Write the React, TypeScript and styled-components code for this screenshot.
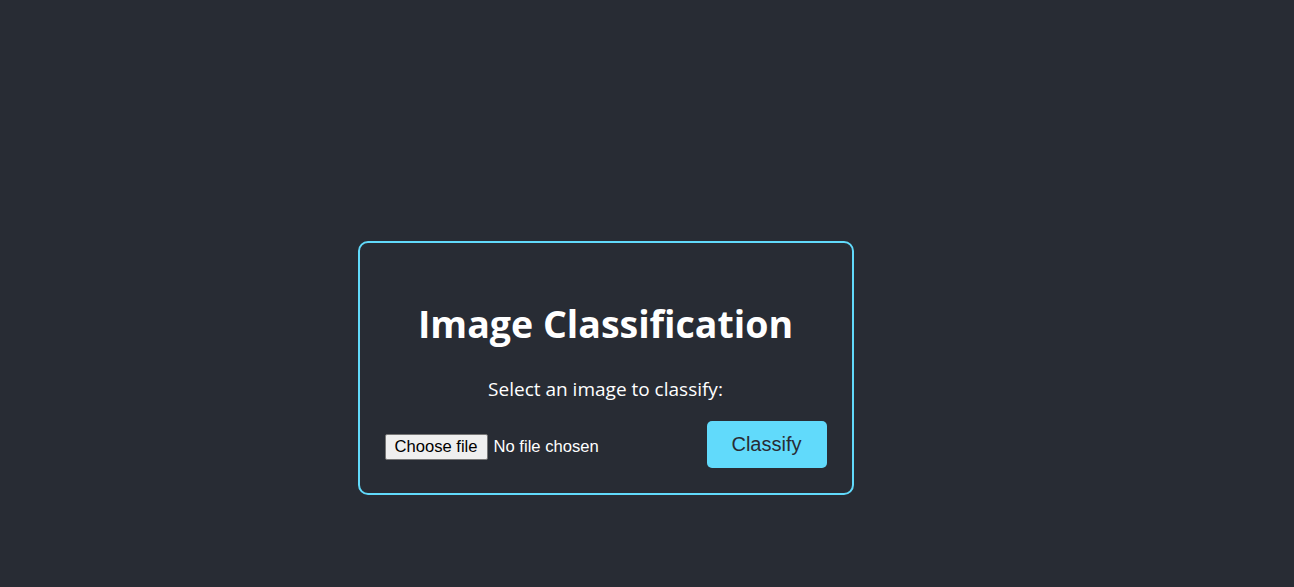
import React, { useState } from "react";
import styled, { createGlobalStyle } from "styled-components";

const Global = createGlobalStyle`
  html, body { margin: 0; padding: 0; background: #282c34; }
  body { font-family: "Open Sans", "Noto Sans", sans-serif; color: #ffffff; }
`;

const Page = styled.div`
  min-height: 587px;
  box-sizing: border-box;
  display: flex;
  justify-content: center;
  align-items: flex-start;
  padding: 241px 83px 0 0;
`;

const Card = styled.div`
  width: 496px;
  box-sizing: border-box;
  border: 2px solid #61dafb;
  border-radius: 10px;
  padding: 56px 25px 25px 25px;
  display: flex;
  flex-direction: column;
  align-items: stretch;
  text-align: center;
`;

const Title = styled.h1`
  margin: 0;
  font-size: 37.5px;
  line-height: 50px;
  font-weight: 700;
  color: #ffffff;
`;

const Subtitle = styled.p`
  margin: 28px 0 0;
  font-size: 19px;
  line-height: 24px;
  color: #ffffff;
`;

const Row = styled.div`
  margin-top: 20px;
  display: flex;
  justify-content: space-between;
  align-items: center;
`;

const FilePicker = styled.label`
  display: flex;
  align-items: center;
  gap: 6px;
  margin-top: 4px;
  font-family: Arial, "Liberation Sans", sans-serif;
  font-size: 16.6px;
  color: #ffffff;
  cursor: pointer;
`;

const HiddenInput = styled.input`
  position: absolute;
  width: 1px;
  height: 1px;
  opacity: 0;
  overflow: hidden;
`;

const PickerButton = styled.span`
  box-sizing: border-box;
  height: 26px;
  padding: 0 9px;
  display: inline-flex;
  align-items: center;
  background: #efefef;
  color: #000000;
  border: 1px solid #767676;
  border-radius: 2px;
`;

const FileName = styled.span`
  color: #ffffff;
`;

const ClassifyButton = styled.button`
  width: 120px;
  height: 47px;
  border: none;
  border-radius: 5px;
  background: #61dafb;
  color: #282c34;
  font-family: Arial, "Liberation Sans", sans-serif;
  font-size: 20px;
  cursor: pointer;
`;

export default function App() {
  const [fileName, setFileName] = useState<string>("No file chosen");
  return (
    <>
      <Global />
      <Page>
        <Card>
          <Title>Image Classification</Title>
          <Subtitle>Select an image to classify:</Subtitle>
          <Row>
            <FilePicker>
              <HiddenInput
                type="file"
                accept="image/*"
                onChange={(e) => setFileName(e.target.files?.[0]?.name ?? "No file chosen")}
              />
              <PickerButton>Choose file</PickerButton>
              <FileName>{fileName}</FileName>
            </FilePicker>
            <ClassifyButton type="button">Classify</ClassifyButton>
          </Row>
        </Card>
      </Page>
    </>
  );
}
